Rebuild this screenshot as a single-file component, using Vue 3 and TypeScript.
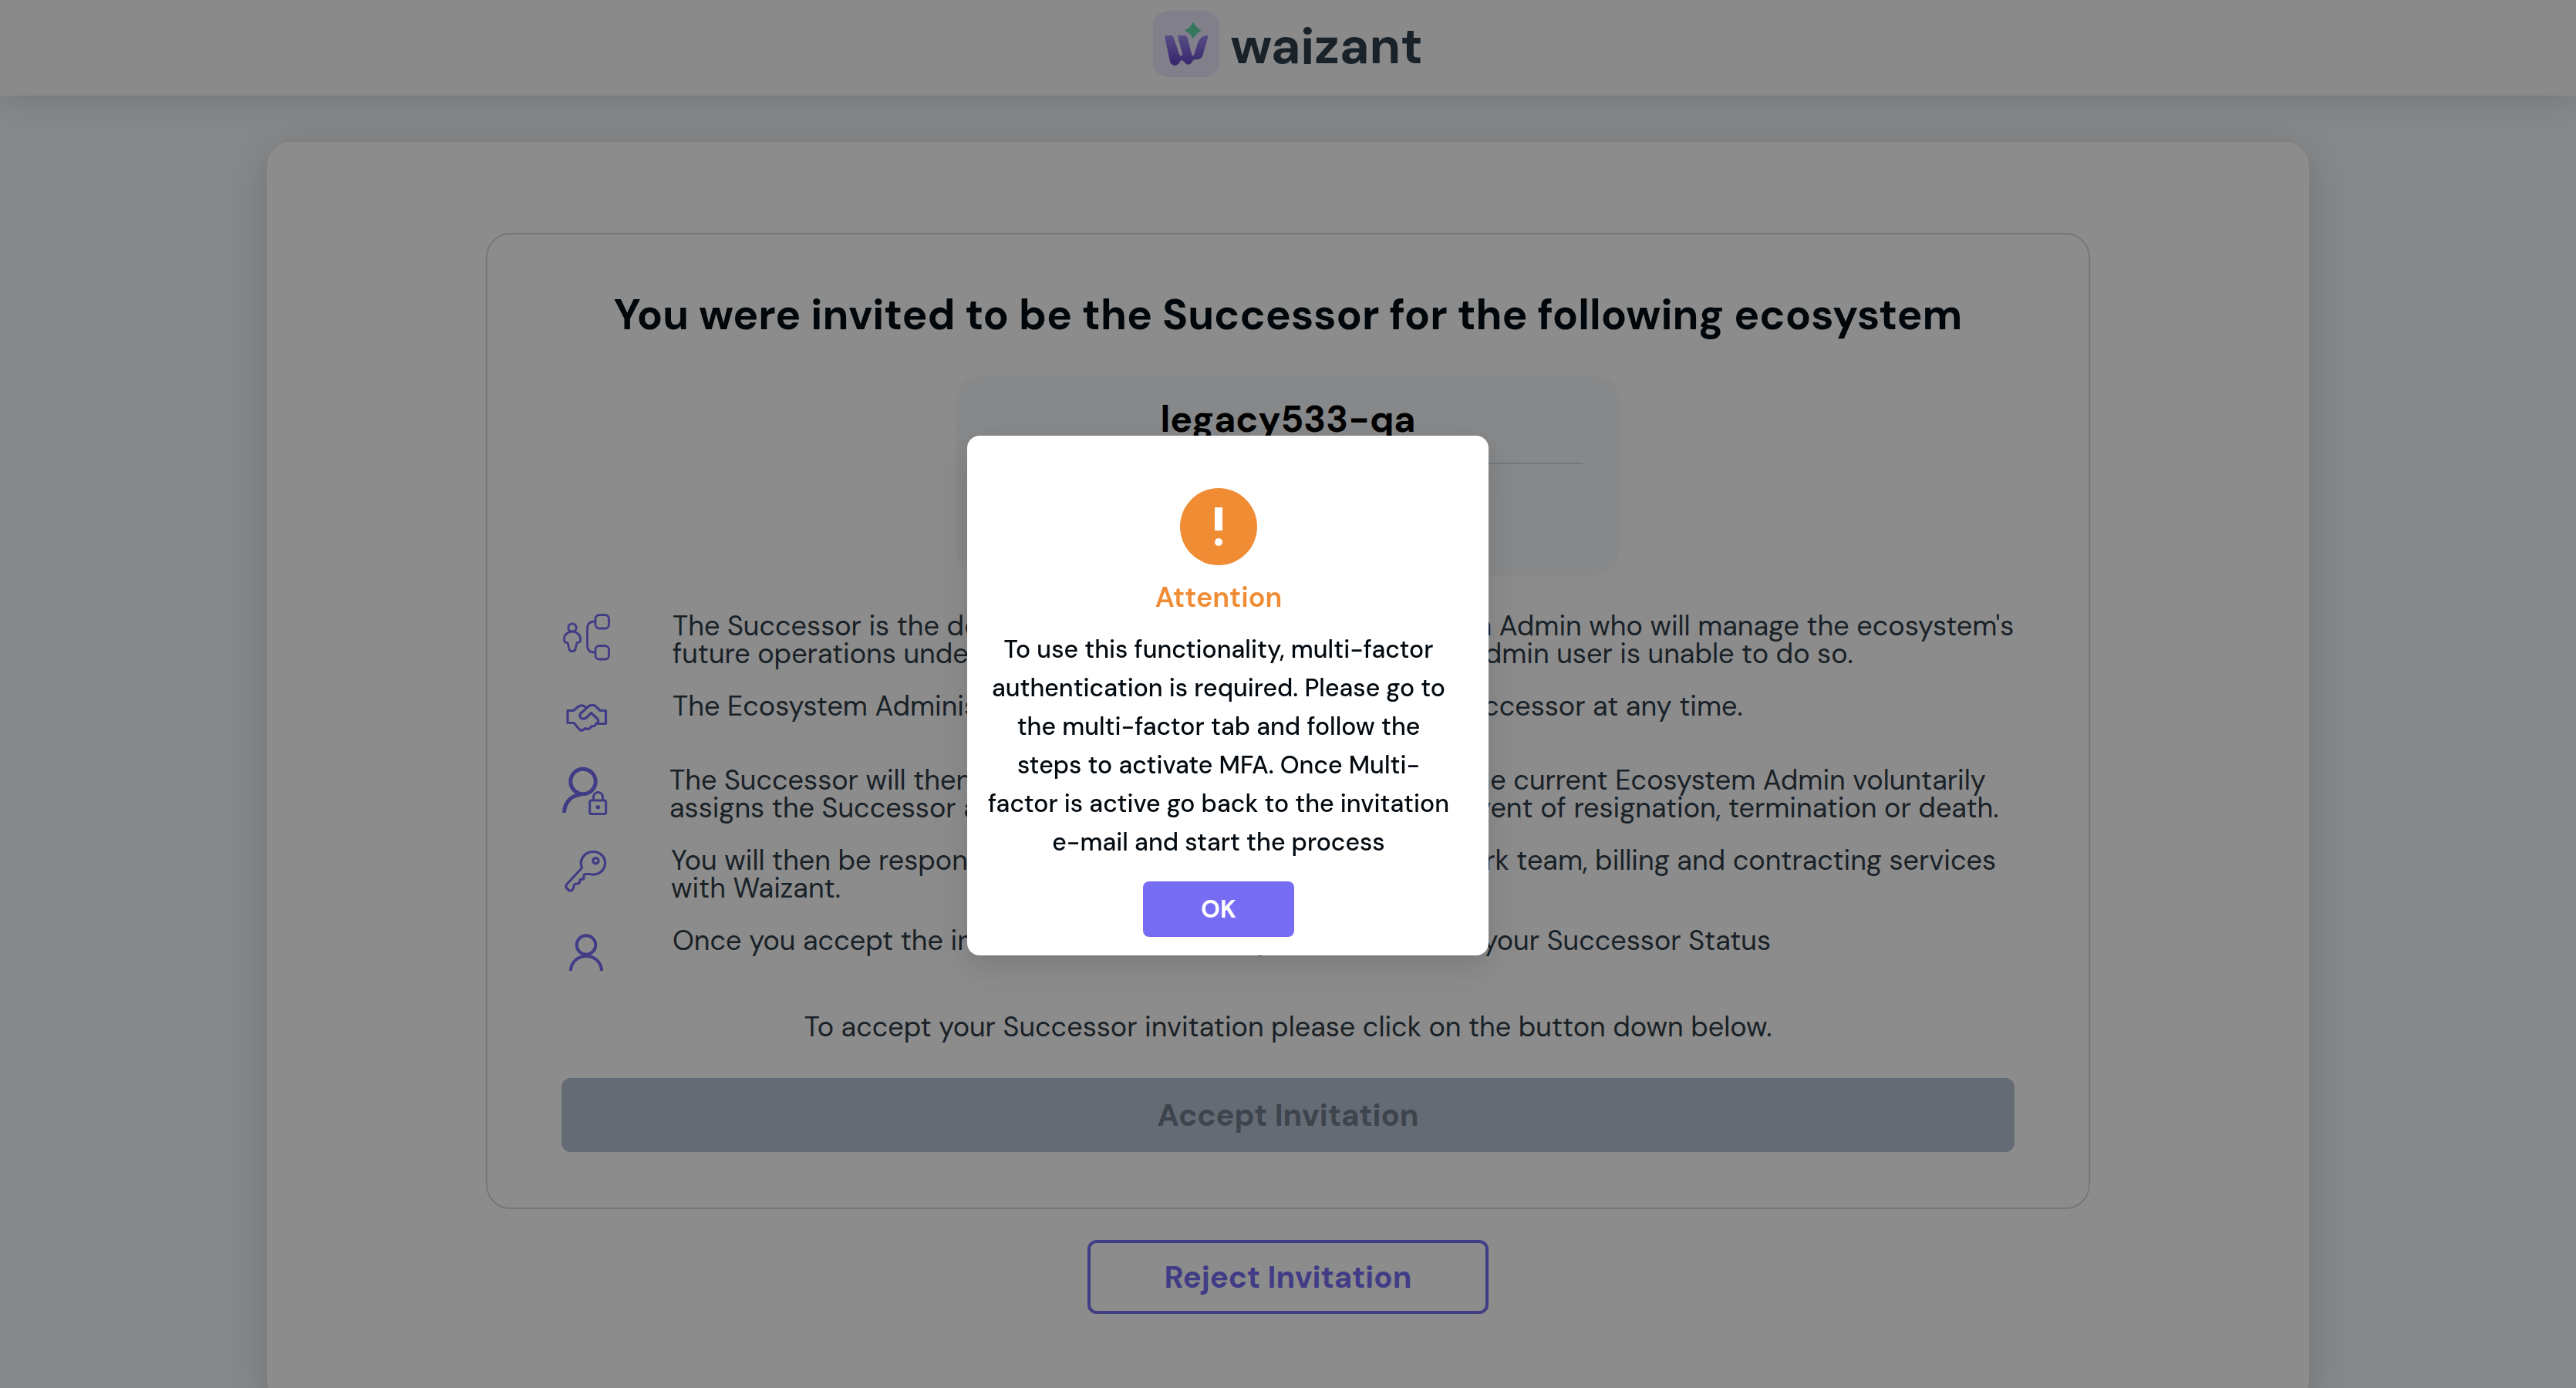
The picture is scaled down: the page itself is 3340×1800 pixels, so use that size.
<script setup lang="ts">
import { ref } from 'vue'

type IconName = 'successor' | 'handshake' | 'userLock' | 'key' | 'user'

interface InfoRow {
  icon: IconName
  width: number
  lines: string[]
}

const ecosystem = 'legacy533-qa'
const noticeOpen = ref(true)

const rows: InfoRow[] = [
  {
    icon: 'successor',
    width: 64,
    lines: [
      "The Successor is the designated user chosen by the Ecosystem Admin who will manage the ecosystem's",
      'future operations under circumstances where the Ecosystem Admin user is unable to do so.',
    ],
  },
  {
    icon: 'handshake',
    width: 64,
    lines: ['The Ecosystem Administrator reserves the right to replace a Successor at any time.'],
  },
  {
    icon: 'userLock',
    width: 60,
    lines: [
      'The Successor will then become the new Ecosystem Admin if the current Ecosystem Admin voluntarily',
      'assigns the Successor as the new Ecosystem Admin or in the event of resignation, termination or death.',
    ],
  },
  {
    icon: 'key',
    width: 62,
    lines: [
      'You will then be responsible for managing all the ecosystem, work team, billing and contracting services',
      'with Waizant.',
    ],
  },
  {
    icon: 'user',
    width: 64,
    lines: ['Once you accept the invitation email will be updated to reflect your Successor Status'],
  },
]
</script>

<template>
  <div class="page">
    <header class="topbar">
      <svg class="logo" viewBox="0 0 86 86" aria-hidden="true">
        <defs>
          <linearGradient id="mark" x1="0" y1="0" x2="0" y2="1">
            <stop offset="0" stop-color="#a08cf0" />
            <stop offset="1" stop-color="#6344c8" />
          </linearGradient>
        </defs>
        <rect width="86" height="86" rx="20" fill="#e9e8fb" />
        <path
          fill="url(#mark)"
          d="M17 32h6c2 0 3 1 3.500 2.500L34 56c1 3 4 3.500 4 0L32.500 35c-.5-2 0-3 1.500-3h7.500c1.500 0 2.500 1 3 2.500L50 56c.5 2.500 3 2.500 3.500 0l4.500-14c2-6 6-9.500 11-10c2 0 2.500.5 2 2.500L65 56c-1.500 5-4 7-8 7h-2c-2 0-3 1-5 4c-2.500 3.500-6 3.500-9 0l-3-3c-1.500 0-2.500 1-4 3.500c-3 5-10 4.500-12-1.500L15.500 35c-.5-2 0-3 1.500-3z"
        />
        <path fill="#62d8ad" d="M52 14.500q3.500 7.500 11 11q-7.500 3.500-11 11q-3.500-7.500-11-11q7.500-3.500 11-11z" />
      </svg>
      <span class="wordmark">waizant</span>
    </header>

    <main class="sheet">
      <section class="invite">
        <h1>You were invited to be the Successor for the following ecosystem</h1>

        <div class="ecosystem">
          <h2>{{ ecosystem }}</h2>
          <hr />
        </div>

        <ul class="rows">
          <li v-for="row in rows" :key="row.icon" class="row">
            <svg
              class="icon"
              :width="row.width"
              height="64"
              :viewBox="`0 0 ${row.width} 64`"
              aria-hidden="true"
            >
              <g v-if="row.icon === 'successor'" stroke-width="2.800">
                <rect x="44" y="3.500" width="17.500" height="17.500" rx="5" />
                <rect x="44" y="43.500" width="17.500" height="17.500" rx="5" />
                <path d="M44 12h-1.500c-6 0-9 3-9 9v22c0 6 3 9 9 9H44" />
                <circle cx="14" cy="20" r="5.200" />
                <path
                  d="M8.500 26.500C4.500 29 3.500 31.500 3.500 34v2c0 2.500 1.500 3.500 4.500 3.500l2 8.500c1 3.500 7 3.500 8 0l2-8.500c3 0 4.500-1 4.500-3.500v-2c0-2.500-1-5-5-7.500c-3-2-8-2-11 0z"
                />
              </g>
              <g v-else-if="row.icon === 'handshake'" stroke-width="3.200">
                <path
                  d="M31.500 19.500C28.500 16.300 24 16 21 19l-5.500 4.500H8v16h8l7 8c1.800 2.200 4 2.200 6 .5l2-1.500c2.500 1.500 5.500 1 7-1.500l1.500-1.500c3.500.5 5.500-1 5.500-3.500c3-1 3.500-3.500 1.500-6l-8-7.500l-6.500 6.500c-6 3.500-10-2-7-6L34 19c4-4 9-3 12 .5l4 4h7.500v17H46.500"
                />
              </g>
              <g v-else-if="row.icon === 'userLock'">
                <circle cx="28" cy="19.500" r="16.200" stroke-width="5" />
                <path d="M3.500 60C4 47 12 37.500 25 36.500" stroke-width="5" />
                <rect x="36.700" y="44" width="21" height="17.500" rx="2" stroke-width="3" />
                <path d="M41.500 44v-4.500a6 6 0 0 1 12 0V44" stroke-width="3" />
                <circle class="solid" cx="47.300" cy="52.700" r="2.700" />
              </g>
              <g v-else-if="row.icon === 'key'" stroke-width="3.200">
                <path
                  d="M26.500 27.500C22 16 31 6.500 41 6.500c9 0 15.500 6.500 15.500 14.500c0 10-9 17-20 14.500h-6c-2 0-1.500 3-1.500 5c0 1.500-1 2-2.500 1.800c-2.500-.3-3 1-3 3c0 2-1 2.700-3 2.700c-3.500 0-4.500 1-4.500 3.500c0 2-.5 3-2 4.500c-2 1.800-3 1.800-5 0l-2-2c-2-2-1.500-3.500 0-5.500z"
                />
                <circle cx="44.500" cy="18.300" r="3.600" />
              </g>
              <g v-else stroke-width="4">
                <circle cx="32" cy="23.500" r="12.300" />
                <path d="M12 57c0-11 9-19 20-19s20 8 20 19" />
              </g>
            </svg>
            <p>
              <span v-for="line in row.lines" :key="line" class="line">{{ line }}</span>
            </p>
          </li>
        </ul>

        <p class="hint">To accept your Successor invitation please click on the button down below.</p>
        <button class="btn accept" type="button" disabled>Accept Invitation</button>
      </section>

      <button class="btn reject" type="button">Reject Invitation</button>
    </main>

    <div v-if="noticeOpen" class="mask">
      <div class="modal" role="alertdialog" aria-modal="true" aria-labelledby="notice-title">
        <svg class="alert" viewBox="0 0 100 100" aria-hidden="true">
          <circle cx="50" cy="50" r="50" fill="#f08c34" />
          <path d="M45 25h10v30H45z" fill="#fff" />
          <circle cx="50" cy="70" r="5" fill="#fff" />
        </svg>
        <h3 id="notice-title">Attention</h3>
        <p>
          To use this functionality, multi-factor authentication is required. Please go to the
          multi-factor tab and follow the steps to activate MFA. Once Multi-factor is active go back
          to the invitation e-mail and start the process
        </p>
        <button class="ok" type="button" @click="noticeOpen = false">OK</button>
      </div>
    </div>
  </div>
</template>

<style>
body {
  margin: 0;
}
</style>

<style scoped>
.page {
  height: 100vh;
  overflow: hidden;
  background: #f5f7f9;
  color: #2f3c47;
  font-family: 'DM Sans', Inter, sans-serif;
}

h1,
h2,
h3,
p,
ul {
  margin: 0;
  padding: 0;
}

.topbar {
  position: relative;
  display: flex;
  justify-content: center;
  align-items: center;
  gap: 14px;
  padding: 14px 0 24px;
  background: #fbfbfb;
  box-shadow: 0 8px 40px rgba(0, 0, 0, 0.12);
}

.logo {
  width: 86px;
  height: 86px;
}

.wordmark {
  padding-top: 6px;
  font-size: 66px;
  line-height: 80px;
  font-weight: 700;
  color: #2f3f4c;
}

.sheet {
  box-sizing: border-box;
  max-width: 2648px;
  margin: 60px auto 0;
  padding: 118px 284px;
  border-radius: 32px;
  background: #fff;
  box-shadow: 0 8px 56px rgba(0, 0, 0, 0.16);
}

.invite {
  padding: 68px 96px 72px;
  border: 2px solid #d1dbe5;
  border-radius: 32px;
}

h1 {
  font-size: 55px;
  line-height: 72px;
  font-weight: 700;
  text-align: center;
  color: #000c12;
}

.ecosystem {
  box-sizing: border-box;
  width: 860px;
  max-width: 100%;
  min-height: 258px;
  margin: 44px auto 48px;
  padding: 24px 48px;
  border-radius: 32px;
  background: #f5f7fa;
}

h2 {
  font-size: 48px;
  line-height: 64px;
  font-weight: 700;
  text-align: center;
  color: #000;
}

hr {
  height: 2px;
  margin: 24px 0 0;
  border: 0;
  background: #d1dbe5;
}

.rows {
  display: flex;
  flex-direction: column;
  gap: 32px;
  list-style: none;
}

.row {
  display: flex;
  align-items: flex-start;
  gap: 80px;
  min-height: 64px;
}

.icon {
  flex: none;
  fill: none;
  stroke: #776df4;
  stroke-linejoin: round;
}

.solid {
  fill: #776df4;
  stroke: none;
}

.row p,
.hint {
  font-size: 36px;
  line-height: 36px;
}

.line {
  display: block;
  white-space: nowrap;
}

.hint {
  margin: 48px 0;
  text-align: center;
}

.btn {
  box-sizing: border-box;
  display: block;
  height: 96px;
  border-radius: 12px;
  font-family: inherit;
  font-size: 40px;
  font-weight: 700;
}

.accept {
  width: 100%;
  border: 0;
  background: #b6c4d3;
  color: #6f7c8a;
}

.reject {
  width: 520px;
  margin: 40px auto 0;
  border: 4px solid #776df4;
  background: transparent;
  color: #776df4;
}

.mask {
  position: fixed;
  inset: 0;
  display: flex;
  justify-content: center;
  align-items: center;
  padding: 4px 156px 0 0;
  background: rgba(0, 0, 0, 0.45);
}

.modal {
  box-sizing: border-box;
  display: flex;
  flex-direction: column;
  align-items: center;
  width: 676px;
  padding: 68px 48px 24px 24px;
  border-radius: 16px;
  background: #fff;
  box-shadow:
    0 6px 12px -8px rgba(0, 0, 0, 0.12),
    0 12px 32px rgba(0, 0, 0, 0.08),
    0 18px 56px 16px rgba(0, 0, 0, 0.05);
}

.alert {
  width: 100px;
  height: 100px;
}

h3 {
  margin: 18px 0;
  font-size: 36px;
  line-height: 48px;
  font-weight: 600;
  color: #f08c34;
}

.modal p {
  font-size: 32px;
  line-height: 50px;
  font-weight: 500;
  text-align: center;
  color: #02090f;
}

.ok {
  width: 196px;
  height: 72px;
  margin-top: 26px;
  border: 0;
  border-radius: 8px;
  background: #776df4;
  font-family: inherit;
  font-size: 32px;
  font-weight: 700;
  color: #fff;
}
</style>
